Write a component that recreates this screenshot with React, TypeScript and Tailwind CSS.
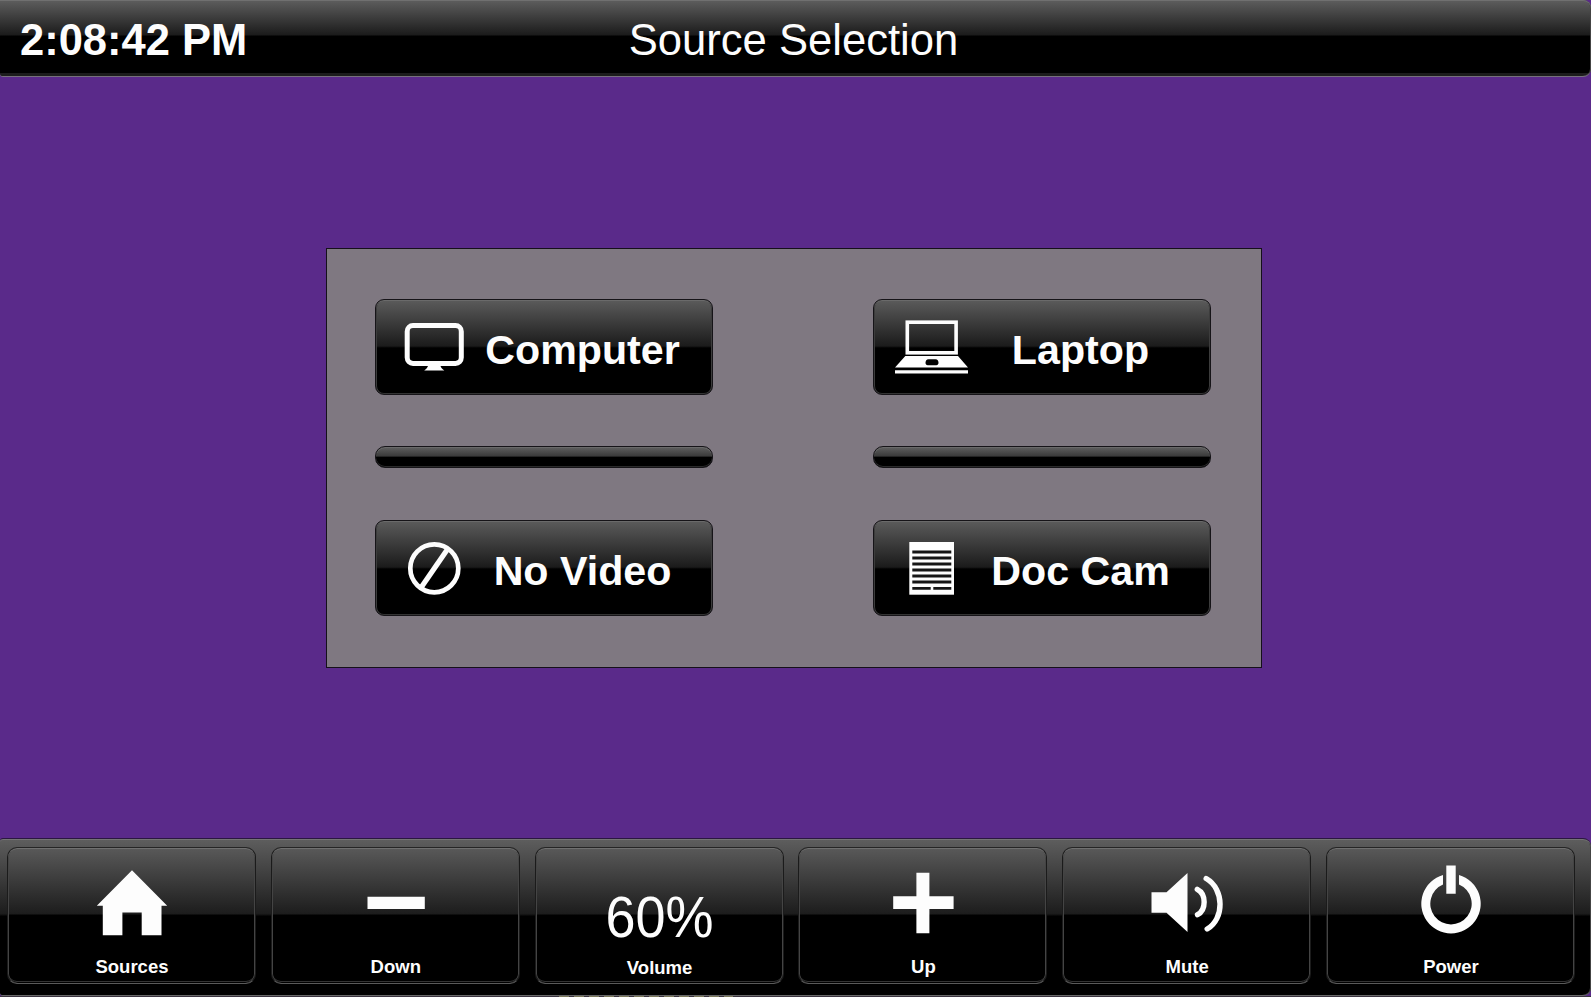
import type { ReactNode } from "react";

const ComputerIcon = () => (
    <svg viewBox="0 0 80 60" className="h-[60px] w-20 shrink-0" fill="none">
        <rect x="13.2" y="8.600" width="54.1" height="37.8" rx="5.8" stroke="#fdfdfd" strokeWidth="5" />
        <path d="M34.5 47.500h11.5c.6 2.6 2 4.5 4.3 6H30.2c2.3-1.5 3.7-3.4 4.3-6z" fill="#fdfdfd" />
    </svg>
);

const LaptopIcon = () => (
    <svg viewBox="0 0 80 60" className="h-[60px] w-20 shrink-0" fill="none">
        <rect x="15.3" y="5.2" width="48.8" height="30.6" stroke="#fdfdfd" strokeWidth="3.6" />
        <path fillRule="evenodd" d="M13.3 38.9H66L76 50.6H3zM36.5 42.200c-2 0-3 1.500-3 3.600 0 1.500.8 2.400 2.200 2.400h8.600c1.400 0 2.200-.9 2.200-2.400 0-2.100-1-3.600-3-3.600z" fill="#fdfdfd" />
        <path d="M3 53.200h73v3.400H3z" fill="#fdfdfd" />
    </svg>
);

const NoVideoIcon = () => (
    <svg viewBox="0 0 80 60" className="h-[60px] w-20 shrink-0" fill="none" stroke="#fdfdfd">
        <circle cx="40.3" cy="30.3" r="24" strokeWidth="4.7" />
        <path d="M53.5 11.2 27.3 49.3" strokeWidth="5.2" />
    </svg>
);

const DocCamIcon = () => (
    <svg viewBox="0 0 80 60" className="h-[60px] w-20 shrink-0">
        <rect x="17.3" y="4" width="44.7" height="52.7" fill="#fdfdfd" />
        <path d="M20.3 14h39M20.3 20h39M20.3 26h39M20.3 32h39M20.3 38h39M20.3 44h39M20.3 50.3h18.4M41.3 50.3h18" stroke="#161616" strokeWidth="2.8" />
    </svg>
);

const HomeIcon = () => (
    <path d="M50 15.3 85.2 50.7H79.5V80.3H59.7V57.5H40.4V80.3H20.8V50.7H14.8z" fill="#fdfdfd" />
);

const MinusIcon = () => <path d="M21.5 41.7h57.3v12.2H21.5z" fill="#fdfdfd" />;

const PlusIcon = () => (
    <path d="M43.4 17.7h13V41.2h24.2v12.7H56.4v24.4h-13V53.9H20.2V41.2h23.2z" fill="#fdfdfd" />
);

const SpeakerIcon = () => (
    <>
        <path d="M14.5 37.2H29.5L50.5 18V77L29.5 57.7H14.5z" fill="#fdfdfd" />
        <path d="M60.3 34.3C69.4 39 69.4 55 60.5 59.7M69.2 23.5C87.5 34 87.5 64 70.2 74" fill="none" stroke="#fdfdfd" strokeWidth="5.4" strokeLinecap="round" />
    </>
);

const PowerIcon = () => (
    <>
        <path d="M58 20.1A29.7 29.7 0 1 1 42 20.1V29.6A20.7 20.7 0 1 0 58 29.6z" fill="#fdfdfd" />
        <path d="M45.3 10.5h9.4v28.3h-9.4z" fill="#fdfdfd" />
    </>
);

const SourceButton = ({ icon, label }: { icon: ReactNode; label: string }) => (
    <button className="flex h-24 w-[338px] items-center rounded-[9px] border border-[#161418] bg-[linear-gradient(#5b5b5b_0%,#1b1b1b_49%,#000_51%)] pr-[21px] pl-[18px] shadow-[inset_0_1px_0_#6a6a6a,inset_1px_0_0_#3c3c3c,inset_-1px_0_0_#3c3c3c,inset_0_-1px_0_#333]">
        {icon}
        <span className="flex-1 pt-2 text-center text-[41.2px] leading-none font-bold whitespace-nowrap">{label}</span>
    </button>
);

const Divider = () => (
    <div className="h-[22px] w-[338px] rounded-[10px] border border-[#161418] bg-[linear-gradient(#606060_0%,#3a3a3a_46%,#000_50%)] shadow-[inset_0_1px_0_#6a6a6a,inset_0_-1px_0_#2a2a2a]"></div>
);

const ControlButton = ({ label, children }: { label: string; children: ReactNode }) => (
    <button className="flex h-[137px] flex-1 flex-col items-center rounded-[10px] border border-x-[#1b1b1b] border-t-[#252525] border-b-[#5a5a5a] bg-[linear-gradient(#595959_0%,#1d1d1d_48.5%,#000_50%)] pt-[7px] pl-px shadow-[inset_0_1px_0_#707070,inset_1px_0_0_#444,inset_-1px_0_0_#444,inset_0_-1px_0_#000,inset_0_-2px_0_#333]">
        {children}
        <span className="mt-[18px] text-[18.5px] leading-5 font-bold">{label}</span>
    </button>
);

const Glyph = ({ children }: { children: ReactNode }) => (
    <svg viewBox="0 0 100 84" className="h-[84px] w-[100px] shrink-0">{children}</svg>
);

const App = () => {
    return (
        <div className="flex h-[997px] w-[1591px] flex-col overflow-hidden bg-[#5a2a8a] font-['Liberation_Sans',Arial,sans-serif] text-[#fdfdfd]">
            <header className="grid h-[77px] shrink-0 grid-cols-[1fr_auto_1fr] items-center rounded-r-[8px] rounded-bl-[3px] border-b border-[#77717c] bg-[linear-gradient(#5e5e5e_0px,#1b1b1b_35px,#000_36px,#000_73px,#1c1c1c_73px)] pt-[5px] shadow-[inset_0_1px_0_#707070,inset_-1px_0_0_#444]">
                <div className="pl-5 text-[43.5px] leading-none font-bold">2:08:42 PM</div>
                <h1 className="pr-1 text-[43.6px] leading-none">Source Selection</h1>
            </header>

            <main className="flex flex-1 pt-[171px] pl-[326px]">
                <div className="grid h-[420px] w-[936px] grid-cols-[338px_338px] grid-rows-[96px_22px_96px] content-start gap-x-40 gap-y-[51.4px] border border-[#15101a] bg-[#7f7881] pt-[50px] pl-12">
                    <SourceButton icon={<ComputerIcon />} label="Computer" />
                    <SourceButton icon={<LaptopIcon />} label="Laptop" />
                    <Divider />
                    <Divider />
                    <SourceButton icon={<NoVideoIcon />} label="No Video" />
                    <SourceButton icon={<DocCamIcon />} label="Doc Cam" />
                </div>
            </main>

            <footer className="flex h-[158px] shrink-0 gap-[14.8px] rounded-l-[3px] rounded-r-[8px] border-t border-b border-t-[#2b1740] border-b-[#696969] bg-[linear-gradient(#5e5e5e_0%,#1c1c1c_48%,#000_49.5%)] pt-2 pr-4 pl-[7px] shadow-[inset_0_1px_0_#747474,inset_-1px_0_0_#444]">
                <ControlButton label="Sources"><Glyph><HomeIcon /></Glyph></ControlButton>
                <ControlButton label="Down"><Glyph><MinusIcon /></Glyph></ControlButton>
                <ControlButton label="Volume">
                    <span className="h-[85px] pt-[36px]">
                        <span className="block origin-bottom scale-y-106 text-[54px] leading-none">60%</span>
                    </span>
                </ControlButton>
                <ControlButton label="Up"><Glyph><PlusIcon /></Glyph></ControlButton>
                <ControlButton label="Mute"><Glyph><SpeakerIcon /></Glyph></ControlButton>
                <ControlButton label="Power"><Glyph><PowerIcon /></Glyph></ControlButton>
            </footer>
            <div className="flex h-px shrink-0 bg-[#3b3440] pl-[559px]">
                <div className="w-[174px] bg-[repeating-linear-gradient(90deg,#7d7a5c_0px,#7d7a5c_10px,#3b3440_10px,#3b3440_15px)]"></div>
            </div>
        </div>
    );
};

export default App;
